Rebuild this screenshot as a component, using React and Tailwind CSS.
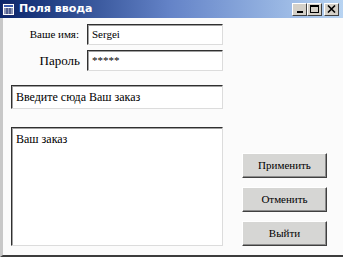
const serif = { fontFamily: '"Liberation Serif", "Times New Roman", "DejaVu Serif", serif' };

function TitleIcon() {
  return (
    <svg width="13" height="13" viewBox="0 0 13 13">
      <rect x="0.5" y="0.5" width="12" height="12" fill="#ffffff" stroke="#1a2a6a" />
      <rect x="2" y="2" width="9" height="2" fill="#3a5ab0" />
      <path d="M2 6h9M2 8h9M2 10h9M5 5v6M8 5v6" stroke="#1a2a6a" strokeWidth="1" />
    </svg>
  );
}

function CaptionButton({ children, className = "" }) {
  return (
    <div
      className={
        "flex h-[13px] w-[15px] items-center justify-center border border-t-white border-l-white border-r-[#404040] border-b-[#404040] bg-[#d4d0c8] " +
        className
      }
    >
      {children}
    </div>
  );
}

function Field({ children, className = "" }) {
  return (
    <div
      className={
        "flex items-center border border-t-[#303030] border-l-[#303030] border-r-[#dcdcdc] border-b-[#dcdcdc] bg-white font-normal shadow-[inset_1px_1px_0_#a0a0a0] " +
        className
      }
      style={serif}
    >
      {children}
    </div>
  );
}

function WinButton({ label }) {
  return (
    <button
      className="flex h-[25px] w-[85px] items-center justify-center border border-t-white border-l-white border-r-[#404040] border-b-[#404040] bg-[#d6d6d4] text-[11px] font-normal text-black shadow-[inset_-1px_-1px_0_#8c8c8c]"
      style={serif}
    >
      {label}
    </button>
  );
}

export default function App() {
  return (
    <div className="flex h-[257px] w-[343px] flex-col overflow-hidden bg-[#fbfbfb]">
      {/* title bar */}
      <div className="flex h-[18px] items-center bg-gradient-to-r from-[#0a246a] via-[#6584c8] to-[#b8d4f2] pl-[2px] pr-[4px]">
        <TitleIcon />
        <span
          className="ml-[4px] text-[11px] font-bold text-white"
          style={{ fontFamily: '"DejaVu Sans", "Liberation Sans", sans-serif' }}
        >
          Поля ввода
        </span>
        <div className="ml-auto flex items-center">
          <CaptionButton>
            <div className="mt-[5px] h-[2px] w-[6px] bg-black" />
          </CaptionButton>
          <CaptionButton>
            <div className="h-[8px] w-[9px] border border-t-2 border-black" />
          </CaptionButton>
          <CaptionButton className="ml-[2px]">
            <svg width="9" height="8" viewBox="0 0 9 8">
              <path d="M1 0.5l7 7M8 0.5l-7 7" stroke="#000" strokeWidth="1.6" />
            </svg>
          </CaptionButton>
        </div>
      </div>

      {/* body */}
      <div className="flex flex-1 border-b-2 border-l-[3px] border-b-[#3c3c3c] border-l-[#c8c8c8] pl-[8px]">
        <div className="flex w-[212px] flex-col pt-[6px]">
          <div className="flex items-center">
            <span className="w-[69px] pr-[1px] text-right text-[11px] text-black" style={serif}>
              Ваше имя:
            </span>
            <Field className="ml-[7px] h-[21px] flex-1 px-[4px] text-[11px] text-black">Sergei</Field>
          </div>
          <div className="mt-[5px] flex items-center">
            <span className="w-[69px] text-right text-[13px] text-black" style={serif}>
              Пароль
            </span>
            <Field className="ml-[7px] h-[21px] flex-1 px-[4px] text-[11px] text-black">*****</Field>
          </div>
          <Field className="mt-[14px] h-[24px] px-[4px] text-[12px] text-black">Введите сюда Ваш заказ</Field>
          <Field className="mt-[18px] h-[119px] items-start px-[4px] pt-[2px] text-[12px] text-black">
            Ваш заказ
          </Field>
        </div>
        <div className="ml-[19px] flex flex-col gap-[9px] pt-[135px]">
          <WinButton label="Применить" />
          <WinButton label="Отменить" />
          <WinButton label="Выйти" />
        </div>
      </div>
    </div>
  );
}
